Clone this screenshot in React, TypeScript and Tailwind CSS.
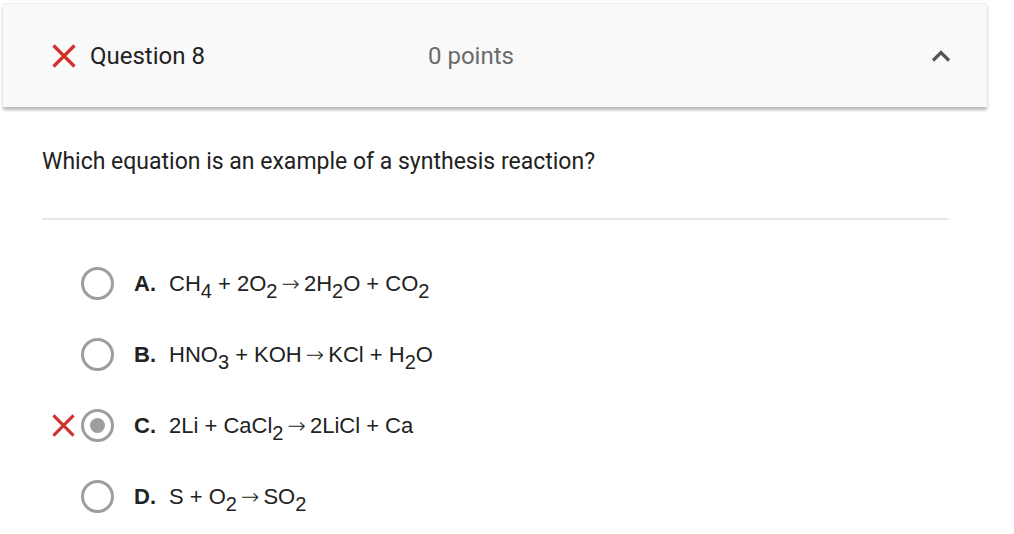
import React from "react";

const XIcon = ({ size = 24 }: { size?: number }) => (
  <svg width={size} height={size} viewBox="0 0 24 24">
    <path d="M1.5 1.5 L22.5 22.5 M22.5 1.5 L1.5 22.5" stroke="#d0312d" strokeWidth="3.2" fill="none" />
  </svg>
);

const Radio = ({ checked }: { checked?: boolean }) => (
  <div className="w-[33px] h-[33px] rounded-full border-[3px] border-[#9e9e9e] flex items-center justify-center shrink-0">
    {checked && <div className="w-[15px] h-[15px] rounded-full bg-[#9e9e9e]" />}
  </div>
);

const Sub = ({ children }: { children: React.ReactNode }) => (
  <span className="relative top-[7px] text-[20px] leading-none">{children}</span>
);

const Arrow = () => <span className="mx-[4px] font-light" style={{ fontFamily: "'DejaVu Sans', sans-serif" }}>→</span>;

const Option = ({ letter, checked, wrong, children }: { letter: string; checked?: boolean; wrong?: boolean; children: React.ReactNode }) => (
  <div className="flex items-center h-[71px]" style={{ fontFamily: "'Liberation Sans', Arial, sans-serif" }}>
    <div className="w-[25px] mr-[6px] flex justify-end">{wrong && <XIcon size={23} />}</div>
    <Radio checked={checked} />
    <span className="ml-[20px] w-[35px] font-bold text-[22px] text-[#222]">{letter}.</span>
    <span className="text-[22px] text-[#222] whitespace-nowrap">{children}</span>
  </div>
);

export default function App() {
  return (
    <div className="w-[1014px] h-[534px] bg-white overflow-hidden" style={{ fontFamily: "Roboto, 'Liberation Sans', sans-serif" }}>
      <div className="pt-[3px] pl-[3px]">
        <div className="w-[984px] h-[104px] bg-[#f9f9f9] border-t border-[#eeeeee] shadow-[0_3px_3px_rgba(0,0,0,0.28)] flex items-center pl-[49px] pr-[36px]">
          <div className="flex items-center w-[376px]">
            <XIcon size={24} />
            <span className="ml-[14px] text-[24px] text-[#222]">Question 8</span>
          </div>
          <span className="text-[24px] text-[#6b6b6b]">0 points</span>
          <div className="ml-auto">
            <svg width="20" height="14" viewBox="0 0 20 14">
              <path d="M2 11.5 L10 3.5 L18 11.5" stroke="#555" strokeWidth="3.2" fill="none" />
            </svg>
          </div>
        </div>
      </div>
      <div className="pl-[42px] w-[948px]">
        <div className="h-[111px] flex items-center text-[23px] text-[#222]">Which equation is an example of a synthesis reaction?</div>
        <div className="h-[2px] bg-[#e6e6e6]" />
        <div className="pt-[28px] pl-[8px]">
          <Option letter="A">CH<Sub>4</Sub> + 2O<Sub>2</Sub><Arrow />2H<Sub>2</Sub>O + CO<Sub>2</Sub></Option>
          <Option letter="B">HNO<Sub>3</Sub> + KOH<Arrow />KCl + H<Sub>2</Sub>O</Option>
          <Option letter="C" checked wrong>2Li + CaCl<Sub>2</Sub><Arrow />2LiCl + Ca</Option>
          <Option letter="D">S + O<Sub>2</Sub><Arrow />SO<Sub>2</Sub></Option>
        </div>
      </div>
    </div>
  );
}
